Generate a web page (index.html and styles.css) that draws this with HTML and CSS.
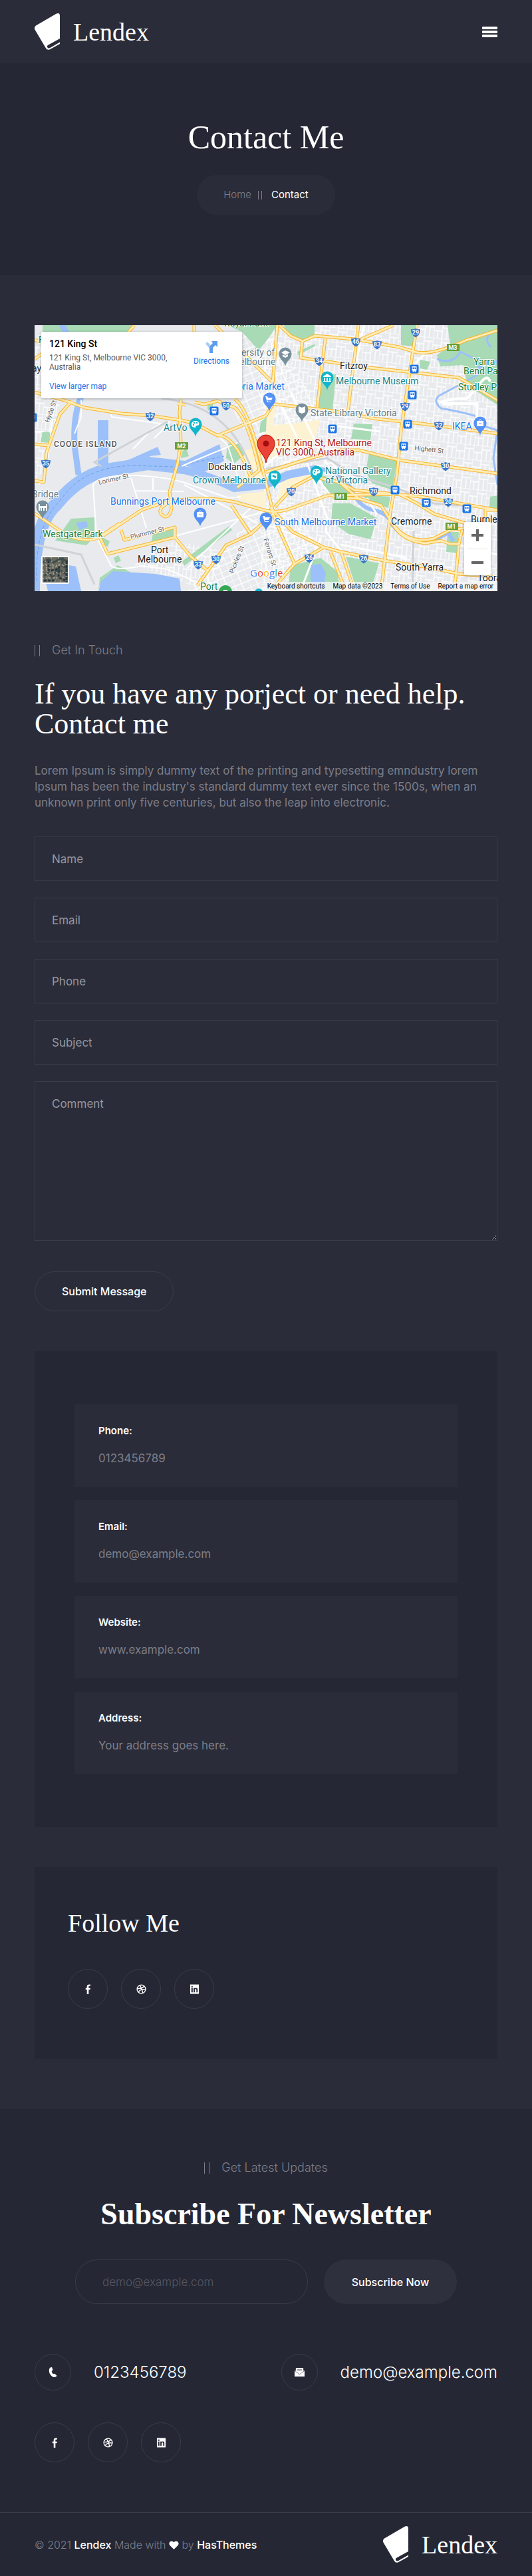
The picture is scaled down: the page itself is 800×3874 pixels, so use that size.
FILE: index.html
```html
<!DOCTYPE html>
<html lang="en">
<head>
<meta charset="utf-8">
<meta name="viewport" content="width=device-width, initial-scale=1">
<title>Lendex - Contact Me</title>
<link rel="stylesheet" href="styles.css">
</head>
<body>
<svg class="sprite" aria-hidden="true">
  <symbol id="logo" viewBox="0 0 38 55"><path fill="#fff" d="M2 18.5 32 1Q38-2 38 4V46L23 54.3Q19 56 17 52.5L.7 25Q-1.3 21 2 18.5Z"/><path fill="none" stroke="var(--back)" stroke-width="5" stroke-linecap="round" d="M21.500 50 42 38.500"/></symbol>
  <symbol id="facebook" viewBox="0 0 16 16"><path d="M6.100 16V8.700H4V6h2.100V3.800C6.100 1.500 7.400.4 9.500.4c1 0 1.900.1 2.100.1V3h-1.500C9 3 8.900 3.600 8.900 4.300V6h2.700l-.4 2.700H8.900V16Z"/></symbol>
  <symbol id="dribbble" viewBox="0 0 16 16"><g fill="none" stroke="currentColor" stroke-width="1.500"><circle cx="8" cy="8" r="6.800"/><path d="M5.300 1.800C8 5 9.500 9 10.300 14.300M1.300 7.100C6 7.200 10 6.500 12.800 3.200M3.300 13C5.500 9 10 7.500 14.800 8.700"/></g></symbol>
  <symbol id="linkedin" viewBox="0 0 16 16"><path fill-rule="evenodd" d="M1 .5h14v15H1ZM3 6v7h2.100V6Zm0-3v2h2.100V3Zm3.500 3v7h2V9.300c0-2 2.500-2.200 2.500 0V13h2V8.500c0-3.200-3.300-3.300-4.500-1.500V6Z"/></symbol>
  <symbol id="phone" viewBox="0 0 16 16"><path d="M4.500.3 6.500 0 8 4.500 6 6c.3 2 1.200 3.700 2.800 5l2.300-.7 3.200 3.200C13.500 15.500 11 16.500 8.500 15.600 4 14 1.500 9 2 4.200 2.200 2.500 3 1 4.500.3Z"/></symbol>
  <symbol id="mail" viewBox="0 0 16 16"><path d="M2 1h12v4l2 1v9H0V6l2-1Z"/><path fill="none" stroke="#777986" d="M.5 6 8 11.500 15.500 6M4 3.500h8M4 5.500h8"/></symbol>
</svg>

<header class="header">
  <div class="container header-row">
    <a class="brand" href="#"><svg class="brand-mark"><use href="#logo"/></svg><span>Lendex</span></a>
    <button class="menu" aria-label="Open menu"><i></i><i></i><i></i></button>
  </div>
</header>

<section class="hero">
  <h1 class="hero-title">Contact Me</h1>
  <nav class="crumbs" aria-label="Breadcrumb"><a href="#">Home</a><span class="bars small"></span><span class="current">Contact</span></nav>
</section>

<main class="container main">
  <div class="map">
    <svg class="map-art" viewBox="0 0 696 400" preserveAspectRatio="xMidYMid slice" role="img" aria-label="Map of Melbourne">
      <defs>
        <pattern id="grid" width="26" height="22" patternUnits="userSpaceOnUse" patternTransform="rotate(6)"><path d="M0 0H26M0 11H13M13 6H26M0 0V22M13 0V22M20 6V22M6 11V22" fill="none" stroke="#fff" stroke-width="1.300"/></pattern>
        <pattern id="city" width="22" height="18" patternUnits="userSpaceOnUse" patternTransform="rotate(-22)"><path d="M0 0H22M0 9H22M0 0V18M11 0V18" fill="none" stroke="#fff" stroke-width="1.400"/></pattern>
        <g id="shield"><path fill="#3875c9" d="M-7-5Q-4-4 0-6 4-4 7-5Q7 4 0 7.500-7 4-7-5Z"/></g>
        <path id="pin" d="M0 19C-1 11-9.500 9-9.500 0A9.500 9.500 0 0 1 9.500 0C9.500 9 1 11 0 19Z"/>
        <g id="train"><rect x="-6.500" y="-6.500" width="13" height="13" rx="2" fill="#1a73e8"/><path fill="#fff" fill-rule="evenodd" d="M-3.500-4h7v6l-1.500 1 1 1.500H1.500L.7 3.500H-.7l-.8 1H-3l1-1.500-1.500-1ZM-2.500-2.500V0h2v-2.500Zm3 0V0h2v-2.500Z"/></g>
        <g id="roads" fill="none" stroke-linejoin="round">
          <path d="M0 101 45 113 75 124 131 133 175 136 221 143 241 148 275 166 C296 165 312 195 326 231M56 114 38 134 18 191 14 236 0 234M0 179 21 181M220 111 218 131 220 178 215 208 203 251 206 275Q204 288 196 288 184 282 192 273L206 264M0 283 38 309Q70 331 101 318L161 278Q230 251 301 266L348 279Q368 284 398 271L441 256 548 254 575 268 601 284 648 298"/>
          <path d="M98 319 110 344 211 319 235 348 260 369M101 316 128 298M130 308 135 323 211 304 211 319M245 391 288 331 325 314 358 284M296 271 325 314M275 166 348 136 358 120M301 111Q321 125 341 208L358 278 388 311 435 334 461 341 525 354 591 364 638 374 696 379M241 116 255 119 275 114 301 124Q321 141 338 218L305 244M0 51 22 35M140 12 150 0M240 0V12M271 0 360 88M0 22 22 30"/>
          <path d="M365 0 358 88M368 0 385 16 403 24 421 16 481 21 548 33 575 41Q600 45 648 23L696 8M403 24 400 49 495 63 568 71 638 79 696 113M437 21 425 124M487 0 471 131M540 0 491 21M575 0 566 58 551 158 545 224 535 281 521 400M355 118 448 129 515 141 581 148 696 163M348 221 421 198 461 188 488 188 548 203 696 223M361 274 388 244 418 228 458 236 481 248 581 258 696 278"/>
          <path d="M448 258 488 261 521 271 538 298 Q560 330 600 321L625 308 650 305M536 294Q550 325 588 328L611 324 625 329 638 329 643 308M638 331 631 400M445 341 468 400M461 341 481 400M355 400 391 359 435 334M391 359 368 308 355 274M696 278 678 278V295M215 118 228 120M458 236 488 261"/>
        </g>
      </defs>
      <rect width="696" height="400" fill="#e8eaed"/>
      <rect x="340" width="356" height="400" fill="url(#grid)"/>
      <path fill="url(#city)" d="M312 10H365L430 140 400 230 365 250 260 360 230 400H348L430 330 365 250 300 130Z"/>
      <path fill="url(#grid)" d="M210 325 290 340 260 400 150 360ZM0 10 40 110 10 240H0Z"/>
      <path fill="#fdf3d3" d="M348 122 364 118 358 150 390 148 430 142 420 178 365 195 345 205ZM310 190 330 185 345 240 320 240ZM305 255 348 250V275L305 262ZM370 235 418 220 410 232 365 265Z"/>
      <g fill="#a8dab5">
        <path d="M12 0H148L140 12H12ZM290 0H365L350 22 337 38 312 10ZM375 0H421V15L400 24 380 14ZM431 71 453 74 448 128 426 124ZM480 148 508 149 505 173 476 171ZM503 191 545 204 538 248 508 238 498 221ZM448 268H475L515 290 505 322 472 314 446 295ZM428 224 470 238 490 262 440 254ZM621 0H696V120L650 90 645 60 610 62 605 45 625 30ZM551 0H577L570 32 551 30ZM290 178H308L316 195 300 208 288 200Z"/>
        <path d="M55 291 90 289V318L78 331 31 324ZM385 362 430 350 455 370 460 400H381ZM468 348 518 358 505 400H485ZM12 160 28 162 25 177 9 176ZM178 312 208 305V320L176 325ZM222 355 293 302 297 308 225 362ZM621 311H638L636 343 619 341ZM685 258 696 256V280H683ZM222 190 228 185 232 197 220 200ZM100 318 113 325 110 333 104 330ZM119 350 126 346 130 354 122 358ZM490 255 535 258 532 275 510 268ZM340 145 349 138 348 160 338 162ZM580 52 595 55 590 67 579 65ZM96 400 98 380 125 361 145 372 98 390ZM260 118 268 112V128H260ZM395 40 422 28 421 32 396 45Z"/>
      </g>
      <g fill="none" stroke="#9cc0f9" stroke-linejoin="round">
        <path stroke-width="9" d="M40-3 48 12M70 108Q58 135 60 180L66 225"/>
        <path stroke-width="20" d="M-2 400Q-2 300 32 270 70 222 121 216L171 208 225 214"/>
        <path stroke-width="12" d="M200 213Q255 222 300 245L348 240 381 225 425 216"/>
        <path stroke-width="6" d="M420 217Q445 215 460 228L475 244Q485 270 505 277 532 282 538 300 560 330 600 324L622 312 630 325M696 55Q670 50 665 75"/>
        <path stroke-width="3" d="M605 51Q630 60 640 40L665 52M665 75Q640 90 612 104 596 112 611 125 640 130 665 137L670 150 696 158 690 200 696 240M685 15Q675 20 686 33"/>
      </g>
      <path fill="#9cc0f9" d="M95 143H111V212H95ZM118 213 185 183 190 195 173 197V206L155 218ZM218 208 278 179 285 204 255 221ZM100 385 118 370 181 374 218 381 220 400H96ZM415 361 430 359 438 372 434 400H415ZM52 361 62 363 70 400H20L8 350ZM62 297 78 295 80 303 68 308Z"/>
      <path fill="none" stroke="#6fa1f0" stroke-dasharray="5 3" d="M3 385Q0 300 40 262 70 215 145 211L210 213 285 197"/>
      <g fill="none" stroke="#fff" stroke-width="2">
        <path d="M70 112V138L60 163M115 134 116 138 190 148 178 155 148 186M203 145 190 160 180 170M88 240Q95 225 155 226 210 229 240 242L292 260 310 258M88 240 93 318 115 362 Q125 370 160 362L200 367 240 385M145 230 168 305M178 230V248M150 249 225 250M0 60 35 75 20 200M221 212 310 175M275 166 290 180 308 235M208 318 348 280M225 240 335 298M15 160H0M230 365 330 270M348 300 445 335"/>
        <path stroke-width="3" d="M368 114 395 170M385 100 440 210M400 180 440 290 438 310 465 345M365 196 348 210M425 230 445 256M440 150 520 160M466 140 475 100 495 0M430 320 400 400M500 260 515 285M460 330 560 350M570 60 585 45M445 205 460 222M640 331 696 345"/>
        <path stroke-width="4" d="M610 116Q625 110 650 110L665 95Q680 70 685 85M612 118H665V145"/>
      </g>
      <g fill="none" stroke="#cfd2d6" stroke-width="3"><path d="M190 110Q300 120 330 230M348 216 440 200 480 225 545 245 600 268 690 275M100 212 90 206 200 145M570 310 568 400M0 330 70 345 90 390"/></g>
      <use href="#roads" stroke="#f9b52b" stroke-width="5"/>
      <use href="#roads" stroke="#feecb4" stroke-width="3"/>

      <g class="route">
        <g transform="translate(174 137)"><use href="#shield"/><text y="3">32</text></g><g transform="translate(288 121)"><use href="#shield"/><text y="3">50</text></g><g transform="translate(17 208)"><use href="#shield"/><text y="3">35</text></g><g transform="translate(246 360)"><use href="#shield"/><text y="3">33</text></g><g transform="translate(273 352)"><use href="#shield"/><text y="3">30</text></g><g transform="translate(483 25)"><use href="#shield"/><text y="3">46</text></g><g transform="translate(515 29)"><use href="#shield"/><text y="3">83</text></g><g transform="translate(573 11)"><use href="#shield"/><text y="3">29</text></g><g transform="translate(428 54)"><use href="#shield"/><text y="3">34</text></g><g transform="translate(557 122)"><use href="#shield"/><text y="3">29</text></g><g transform="translate(608 151)"><use href="#shield"/><text y="3">32</text></g><g transform="translate(618 212)"><use href="#shield"/><text y="3">30</text></g><g transform="translate(386 250)"><use href="#shield"/><text y="3">20</text></g><g transform="translate(510 250)"><use href="#shield"/><text y="3">20</text></g><g transform="translate(622 266)"><use href="#shield"/><text y="3">20</text></g><g transform="translate(413 350)"><use href="#shield"/><text y="3">26</text></g><g transform="translate(495 351)"><use href="#shield"/><text y="3">26</text></g>
        <g fill="#689f38"><path d="M211 176h20v11h-20ZM620 28h19v11h-19ZM451 252h19v11h-19ZM618 297h19v11h-19Z"/></g>
        <text x="221" y="185">M2</text><text x="629" y="37">M3</text><text x="460" y="261">M1</text><text x="627" y="306">M1</text>
      </g>
      <use href="#train" x="270" y="129"/><use href="#train" x="571" y="66"/><use href="#train" x="568" y="105"/><use href="#train" x="448" y="156"/><use href="#train" x="561" y="149"/><use href="#train" x="555" y="182"/><use href="#train" x="542" y="248"/><use href="#train" x="589" y="267"/><use href="#train" x="650" y="276"/><use href="#train" x="-3" y="139"/>
      <g fill="#12b5cb"><use href="#pin" x="242" y="149"/><use href="#pin" x="440" y="79"/><use href="#pin" x="424" y="221"/><use href="#pin" x="361" y="228"/></g>
      <g fill="#5491f5"><use href="#pin" x="249" y="284"/><use href="#pin" x="353" y="111"/><use href="#pin" x="670" y="147"/><use href="#pin" x="348" y="291"/></g>
      <g fill="#78909c"><use href="#pin" x="12" y="273"/><use href="#pin" x="377" y="43"/><use href="#pin" x="402" y="127"/></g>
      <circle cx="287" cy="401" r="10" fill="#34a853"/><circle cx="561" cy="400" r="9" fill="#8db8fa"/><circle cx="337" cy="402" r="6" fill="#12b5cb"/>
      <g fill="#fff">
        <path fill-rule="evenodd" d="M242 144c-8 0-8 10-1 10 3 0 0-3 3-3 6 0 4-7-2-7Zm-3 2h2v2h-2Zm4 0h2v2h-2Zm-5 3h2v2h-2ZM424 216c-8 0-8 10-1 10 3 0 0-3 3-3 6 0 4-7-2-7Zm-3 2h2v2h-2Zm4 0h2v2h-2Zm-5 3h2v2h-2Z"/>
        <path d="M434 77l6-4 6 4v1h-12ZM435 79h2v5h-2ZM439 79h2v5h-2ZM443 79h2v5h-2ZM434 84h12v1h-12ZM356 223h9v9h-9ZM244 281h10v8h-10ZM665 144h10v8h-10ZM371 41l6-3 7 3-7 4ZM373 44l4 2 4-2v3l-4 2-4-2ZM397 122l5 2 5-2v9l-5 2-5-2ZM347 107h3l1 2h7l-2 4h-6l1 2h5v1h-6ZM343 287h3l1 2h7l-2 4h-6l1 2h5v1h-6ZM6 269h2v3h9v-3h2v10h-2v-4h-2v4h-2v-4h-2v4H9v-4H8v4H6ZM284 398h6v2h-6Z"/>
      </g>
      <path d="M247 281q2-4 4 0M668 144q2-4 4 0" fill="none" stroke="#fff"/><path d="M358 226 363 229" stroke="#12b5cb" stroke-width="3"/><path d="M248 284q1 3 3 0M668 147q2 3 4 0" fill="none" stroke="#5491f5"/>
      <path fill="#ea4335" stroke="#b31412" d="M348 207C346 194 335 190 335 178A13 13 0 0 1 361 178C361 190 350 194 348 207Z"/><circle cx="348" cy="178" r="4.500" fill="#a50e0e"/>

      <g class="place"><text x="261" y="218">Docklands</text><text x="459" y="66">Fitzroy</text><text x="564" y="254">Richmond</text><text x="536" y="300">Cremorne</text><text x="543" y="369">South Yarra</text><text x="175" y="343">Port</text><text x="155" y="357">Melbourne</text><text x="656" y="297">Burnley</text><text x="666" y="385">Toorak</text><text x="-4" y="70">ay</text></g>
      <g class="place teal"><text x="194" y="159">ArtVo</text><text x="238" y="238">Crown Melbourne</text><text x="453" y="89">Melbourne Museum</text><text x="437" y="224">National Gallery</text><text x="437" y="238">of Victoria</text></g>
      <g class="place blue"><text x="114" y="270">Bunnings Port Melbourne</text><text x="361" y="301">South Melbourne Market</text><text x="628" y="157">IKEA</text><text x="281" y="97">Victoria Market</text></g>
      <g class="place slate"><text x="415" y="137">State Library Victoria</text><text x="284" y="46">University of</text><text x="296" y="60">Melbourne</text><text x="-4" y="259">Bridge</text></g>
      <g class="place green"><text x="12" y="319">Westgate Park</text><text x="660" y="60">Yarra</text><text x="645" y="74">Bend Park</text><text x="637" y="98">Studley Park</text><text x="285" y="2">Royal Park</text><text x="249" y="398">Port</text><text x="6" y="27">Fo</text></g>
      <g class="place red"><text x="363" y="182">121 King St, Melbourne</text><text x="363" y="196">VIC 3000, Australia</text></g>
      <text class="district" x="29" y="183">COODE ISLAND</text>
      <g class="street"><text transform="translate(22 147) rotate(-71)">Hyde St</text><text transform="translate(97 240) rotate(-13)">Lorimer St</text><text transform="translate(145 322) rotate(-14)" fill="#7a4a12">Plummer St</text><text transform="translate(299 374) rotate(-68)">Pickles St</text><text transform="translate(571 188) rotate(6)">Highett St</text><text transform="translate(344 322) rotate(72)">Ferrars St</text></g>
      <text class="google" x="324" y="378"><tspan fill="#4285f4">G</tspan><tspan fill="#ea4335">o</tspan><tspan fill="#fbbc04">o</tspan><tspan fill="#4285f4">g</tspan><tspan fill="#34a853">l</tspan><tspan fill="#ea4335">e</tspan></text>
    </svg>
    <div class="map-card">
      <div class="map-info"><strong>121 King St</strong><p>121 King St, Melbourne VIC 3000, Australia</p><a href="#">View larger map</a></div>
      <a class="directions" href="#"><svg viewBox="0 0 18 18"><path fill="#a9ccf7" d="M0 4 3 1 10 9 7 12Z"/><path fill="#5c9ded" d="M6 18V11Q6 8 8 6L11 3 9 0H18V9L15 6 11 10V18Z"/></svg>Directions</a>
    </div>
    <button class="satellite" aria-label="Show satellite imagery"><svg viewBox="0 0 38 38"><rect width="38" height="38" fill="#68695f"/><g fill="none"><path stroke="#3f4d4c" stroke-width="3" d="M0 8 9 3 17 8 26 2 38 6M2 28 10 23 15 31 23 18 35 25M30 0V13L38 18"/><path stroke="#a29a8b" stroke-dasharray="2 3" stroke-width="2" d="M0 12 38 13M0 20 38 9M3 0 10 38M13 0 19 38M24 0 27 38M0 32 38 30M0 25 38 22"/><path stroke="#28383f" stroke-width="3" stroke-dasharray="4 2" d="M9 5V19L18 20 25 15 24 30 36 36M36 6V38M2 35H20"/></g></svg></button>
    <div class="zoom"><button aria-label="Zoom in"><svg viewBox="0 0 18 18"><path d="M0 7H7V0H11V7H18V11H11V18H7V11H0Z"/></svg></button><button aria-label="Zoom out"><svg viewBox="0 0 18 18"><path d="M0 7H18V11H0Z"/></svg></button></div>
    <div class="map-legal"><button>Keyboard shortcuts</button><span>Map data ©2023</span><a href="#">Terms of Use</a><a href="#">Report a map error</a></div>
  </div>

  <section class="contact">
    <p class="eyebrow"><span class="bars"></span>Get In Touch</p>
    <h2 class="contact-title">If you have any porject or need help. Contact me</h2>
    <p class="intro">Lorem Ipsum is simply dummy text of the printing and typesetting emndustry lorem Ipsum has been the industry's standard dummy text ever since the 1500s, when an unknown print only five centuries, but also the leap into electronic.</p>
    <form class="form">
      <input class="field" type="text" placeholder="Name" aria-label="Name">
      <input class="field" type="email" placeholder="Email" aria-label="Email">
      <input class="field" type="tel" placeholder="Phone" aria-label="Phone">
      <input class="field" type="text" placeholder="Subject" aria-label="Subject">
      <textarea class="field area" placeholder="Comment" aria-label="Comment"></textarea>
      <button class="submit" type="submit">Submit Message</button>
    </form>
  </section>

  <section class="details">
    <div class="detail"><h3>Phone:</h3><p>0123456789</p></div>
    <div class="detail"><h3>Email:</h3><p>demo@example.com</p></div>
    <div class="detail"><h3>Website:</h3><p>www.example.com</p></div>
    <div class="detail"><h3>Address:</h3><p>Your address goes here.</p></div>
  </section>

  <section class="follow">
    <h2>Follow Me</h2>
    <div class="social"><a href="#" aria-label="Facebook"><svg><use href="#facebook"/></svg></a><a href="#" aria-label="Dribbble"><svg><use href="#dribbble"/></svg></a><a href="#" aria-label="LinkedIn"><svg><use href="#linkedin"/></svg></a></div>
  </section>
</main>

<footer class="footer">
  <div class="container">
    <p class="eyebrow centered"><span class="bars"></span>Get Latest Updates</p>
    <h2 class="news-title">Subscribe For Newsletter</h2>
    <form class="news"><input type="email" placeholder="demo@example.com" aria-label="Email address"><button type="submit">Subscribe Now</button></form>
    <div class="reach">
      <a href="#"><span class="ring"><svg><use href="#phone"/></svg></span>0123456789</a>
      <a href="#"><span class="ring"><svg><use href="#mail"/></svg></span>demo@example.com</a>
    </div>
    <div class="social"><a href="#" aria-label="Facebook"><svg><use href="#facebook"/></svg></a><a href="#" aria-label="Dribbble"><svg><use href="#dribbble"/></svg></a><a href="#" aria-label="LinkedIn"><svg><use href="#linkedin"/></svg></a></div>
  </div>
  <div class="bottom">
    <div class="container bottom-row">
      <p class="copy">© 2021 <a href="#">Lendex</a> Made with <svg class="heart" viewBox="0 0 16 14" role="img" aria-label="love"><path d="M8 14 1.500 7.500C-2 3.500 3-2 8 2.500 13-2 18 3.500 14.500 7.500Z"/></svg> by <a href="#">HasThemes</a></p>
      <a class="brand" href="#"><svg class="brand-mark"><use href="#logo"/></svg><span>Lendex</span></a>
    </div>
  </div>
</footer>
</body>
</html>
```
FILE: styles.css
```css
:root {
  --light: #2a2c39;
  --dark: #252734;
  --line: #3b3c49;
  --muted: #7d7e88;
  --serif: "Liberation Serif", "Times New Roman", serif;
}
* { box-sizing: border-box; }
body { margin: 0; background: var(--light); color: #fff; font: 300 16px/24px Inter, sans-serif; }
h1, h2, h3, p { margin: 0; }
a { color: inherit; text-decoration: none; }
button, input, textarea { font: inherit; color: inherit; margin: 0; }
button { cursor: pointer; }
.sprite { position: absolute; width: 0; height: 0; }
.container { padding: 0 52px; }

.brand { display: flex; align-items: center; gap: 20px; font: 400 38px/48px var(--serif); }
.brand-mark { width: 38px; height: 55px; }
.header { --back: var(--light); }
.header-row { display: flex; justify-content: space-between; align-items: center; height: 95px; }
.menu { display: grid; gap: 2px; width: 23px; padding: 0; border: 0; background: none; }
.menu i { height: 4px; border-radius: 1px; background: #fff; }

.hero { background: var(--dark); padding: 81px 20px 91px; display: flex; flex-direction: column; align-items: center; gap: 27px; }
.hero-title { font: 400 50px/60px var(--serif); }
.crumbs { display: flex; align-items: center; padding: 18px 40px; border-radius: 30px; background: var(--light); font-size: 15px; }
.crumbs a { color: var(--muted); }
.current { font-weight: 400; }
.bars { width: 8px; height: 17px; border: solid var(--muted); border-width: 0 1px; margin-right: 18px; }
.bars.small { width: 6px; height: 13px; margin: 0 14px 0 10px; }

.main { padding-top: 75px; padding-bottom: 75px; }
.map { position: relative; height: 400px; overflow: hidden; font-family: Roboto, sans-serif; font-weight: 400; }
.map-art { display: block; width: 100%; height: 100%; }
.route text { fill: #fff; font: 700 9px Roboto, sans-serif; text-anchor: middle; }
.place text { font: 400 14px Roboto, sans-serif; paint-order: stroke; stroke: #fff; stroke-width: 2px; fill: #202124; }
.teal text { fill: #12858e; }
.blue text { fill: #1a73e8; }
.slate text { fill: #607d8b; }
.green text { fill: #188038; }
.red text { fill: #b31412; }
.district { font: 500 12px Roboto, sans-serif; letter-spacing: 1px; fill: #50545a; paint-order: stroke; stroke: #fff; stroke-width: 2px; }
.street text { font: 400 10px Roboto, sans-serif; fill: #5f6368; paint-order: stroke; stroke: #fff; stroke-width: 2px; }
.google { font: 500 15px "Open Sans", sans-serif; paint-order: stroke; stroke: #fff; stroke-width: 2px; }
.map-card { position: absolute; top: 10px; left: 10px; width: 302px; height: 100px; padding: 9px 19px 9px 12px; display: flex; justify-content: space-between; background: #fff; border-radius: 2px; box-shadow: 0 1px 4px rgba(0, 0, 0, .3); color: #5b5b5b; font-size: 12px; line-height: 14px; }
.map-info { width: 200px; }
.map-info strong { display: block; color: #000; font-size: 14px; line-height: 18px; font-weight: 500; margin-bottom: 5px; }
.map-info p { margin-bottom: 15px; }
.map-card a { color: #1a73e8; }
.directions { display: flex; flex-direction: column; align-items: center; gap: 5px; padding-top: 5px; }
.directions svg { width: 18px; height: 18px; }
.satellite { position: absolute; left: 10px; bottom: 11px; width: 42px; height: 42px; padding: 0; border: 2px solid #fff; border-radius: 2px; overflow: hidden; }
.satellite svg { display: block; width: 38px; height: 38px; }
.zoom { position: absolute; right: 10px; bottom: 24px; width: 40px; background: #fff; border-radius: 2px; box-shadow: 0 1px 4px rgba(0, 0, 0, .3); }
.zoom button { display: grid; place-items: center; width: 30px; height: 40px; margin: 0 5px; padding: 0; border: 0; background: none; }
.zoom button + button { border-top: 1px solid #e6e6e6; }
.zoom svg { width: 18px; height: 18px; fill: #666; }
.map-legal { position: absolute; right: 0; bottom: 0; display: flex; gap: 12px; padding: 0 6px 0 3px; background: rgba(245, 245, 245, .8); color: #000; font-size: 10px; line-height: 14px; }
.map-legal button { padding: 0; border: 0; background: none; }

.contact { padding: 76px 0 60px; }
.eyebrow { display: flex; align-items: center; color: var(--muted); font-size: 18px; line-height: 26px; }
.contact-title { margin: 30px 0 36px; font: 400 44px/45px var(--serif); }
.intro { color: var(--muted); font-size: 17px; font-weight: 400; }
.form { display: grid; gap: 25px; margin-top: 39px; }
.field { display: block; width: 100%; height: 67px; padding: 0 25px; border: 1px solid var(--line); border-radius: 0; background: none; font-size: 17px; font-weight: 400; }
.field::placeholder { color: #9696a0; opacity: 1; }
.area { height: 240px; padding-top: 21px; }
.submit { justify-self: start; height: 60px; margin-top: 21px; padding: 0 40px; border: 1px solid var(--line); border-radius: 30px; background: none; font-weight: 500; }

.details { display: grid; gap: 20px; padding: 80px 60px; background: var(--dark); }
.detail { padding: 28px 36px 31px; background: var(--light); }
.detail h3 { font: 600 15px/24px Inter, sans-serif; }
.detail p { margin-top: 17px; color: var(--muted); font-size: 17px; font-weight: 400; }
.follow { margin-top: 60px; padding: 61px 50px 75px; background: var(--dark); }
.follow h2 { font: 400 38px/46px var(--serif); margin-bottom: 46px; }
.social { display: flex; gap: 20px; }
.social a { display: grid; place-items: center; width: 60px; height: 60px; border: 1px solid var(--line); border-radius: 50%; }
.social svg, .ring svg { width: 15px; height: 15px; fill: #fff; }

.footer { --back: var(--dark); background: var(--dark); padding-top: 76px; }
.centered { justify-content: center; }
.news-title { margin: 29px 0 40px; text-align: center; font: 700 46px/56px var(--serif); }
.news { display: flex; gap: 24px; padding: 0 61px; }
.news input { flex: 1; min-width: 0; height: 67px; padding: 0 40px; border: 1px solid var(--line); border-radius: 34px; background: none; font-size: 17px; }
.news input::placeholder { color: #565763; opacity: 1; }
.news button { width: 200px; height: 67px; padding: 0; border: 0; border-radius: 34px; background: #2f303d; font-weight: 500; }
.reach { display: flex; justify-content: space-between; margin: 75px 0 48px; font-size: 24px; line-height: 30px; }
.reach a { display: flex; align-items: center; gap: 34px; }
.ring { display: grid; place-items: center; width: 55px; height: 55px; border: 1px solid var(--line); border-radius: 50%; }
.bottom { margin-top: 75px; border-top: 1px solid var(--line); }
.bottom-row { display: flex; justify-content: space-between; align-items: center; padding-top: 20px; padding-bottom: 20px; }
.copy { color: var(--muted); }
.copy a { color: #fff; font-weight: 500; }
.heart { width: 15px; height: 13px; fill: #fff; vertical-align: -1px; }
```
